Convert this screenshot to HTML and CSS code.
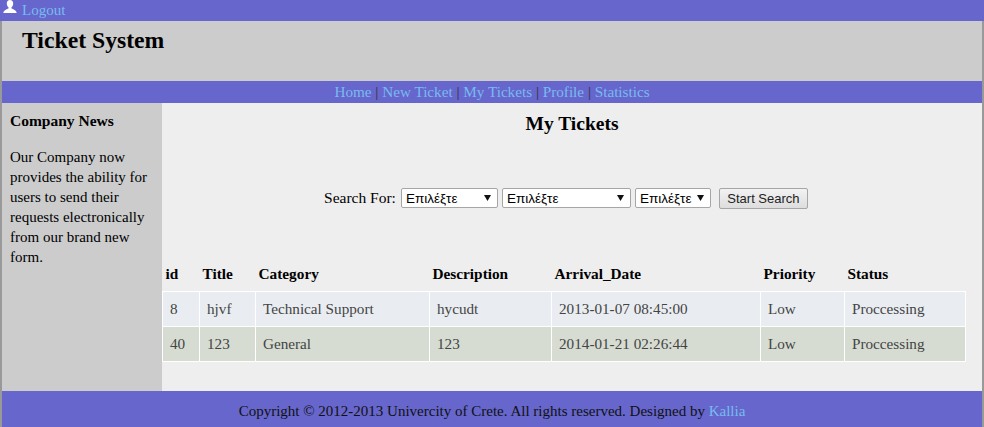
FILE: index.html
```html
<!DOCTYPE html>
<html>
<head>
    <meta name="viewport" content="width=device-width, initial-scale=1">
    <title>Ticket System</title>
<link rel="stylesheet" href="styles.css">
</head>
<body>
  <div class="wrapper">
    <div class="topbar">
      <svg class="user-icon" width="14" height="14" viewBox="0 0 14 14"><path d="M7 0C5 0 3.8 1.5 3.8 3.5 3.8 5.2 4.6 6.6 5.5 7.3V8.4C4 9.2 .6 9.8.3 13H13.7C13.4 9.8 10 9.2 8.5 8.4V7.3C9.4 6.6 10.2 5.2 10.2 3.5 10.2 1.5 9 0 7 0Z" fill="#fff"/></svg>
      <a href="#">Logout</a>
    </div>
    <div class="header">
      <h1>Ticket System</h1>
    </div>
    <div class="nav">
      <a href="#">Home</a> | <a href="#">New Ticket</a> | <a href="#">My Tickets</a> | <a href="#">Profile</a> | <a href="#">Statistics</a>
    </div>
    <div class="middle">
      <div class="sidebar">
        <h3>Company News</h3>
        <p>Our Company now provides the ability for users to send their requests electronically from our brand new form.</p>
      </div>
      <div class="content">
        <h2>My Tickets</h2>
        <form class="search">
          <span>Search For:</span>
          <select class="sel-a"><option>Επιλέξτε</option></select>
          <select class="sel-b"><option>Επιλέξτε</option></select>
          <select class="sel-c"><option>Επιλέξτε</option></select>
          <button type="button">Start Search</button>
        </form>
        <table class="tickets">
          <colgroup>
            <col class="c-id"><col class="c-title"><col class="c-cat"><col class="c-desc"><col class="c-date"><col class="c-pri"><col class="c-status">
          </colgroup>
          <thead>
            <tr><th>id</th><th>Title</th><th>Category</th><th>Description</th><th>Arrival_Date</th><th>Priority</th><th>Status</th></tr>
          </thead>
          <tbody>
            <tr class="odd"><td>8</td><td>hjvf</td><td>Technical Support</td><td>hycudt</td><td>2013-01-07 08:45:00</td><td>Low</td><td>Proccessing</td></tr>
            <tr class="even"><td>40</td><td>123</td><td>General</td><td>123</td><td>2014-01-21 02:26:44</td><td>Low</td><td>Proccessing</td></tr>
          </tbody>
        </table>
      </div>
    </div>
    <div class="footer">
      Copyright © 2012-2013 Univercity of Crete. All rights reserved. Designed by <a href="#">Kallia</a>
    </div>
  </div>
</body>
</html>
```
FILE: styles.css
```css
* {
  box-sizing: border-box;
}

html, body {
  height: 100%;
}

body {
  margin: 0;
  background: #999999;
  font-family: "Liberation Serif", "Times New Roman", serif;
  font-size: 15px;
  color: #000;
  overflow: hidden;
}

a {
  color: #78bcee;
  text-decoration: none;
}

.wrapper {
  margin: 0 2px;
  height: 427px;
  display: flex;
  flex-direction: column;
}

.topbar {
  height: 21px;
  margin: 0 -2px;
  background: #6666cc;
  display: flex;
  align-items: flex-start;
  gap: 5px;
  padding-left: 3px;
  line-height: 21px;
}

.user-icon {
  flex: none;
}

.header {
  height: 60px;
  background: #cccccc;
  padding: 6px 0 0 20px;
}

.header h1 {
  margin: 0;
  font-size: 23.7px;
  line-height: 27px;
}

.nav {
  height: 22px;
  background: #6666cc;
  text-align: center;
  font-size: 15.2px;
  line-height: 22px;
  color: #333;
}

.middle {
  height: 288px;
  display: flex;
}

.sidebar {
  width: 160px;
  background: #cccccc;
  padding: 8px;
  line-height: 20px;
}

.sidebar h3 {
  margin: 0 0 16px;
  font-size: 15.5px;
}

.sidebar p {
  margin: 0;
}

.content {
  flex: 1;
  background: #eeeeee;
}

.content h2 {
  margin: 0;
  padding-top: 10px;
  height: 85px;
  font-size: 19.5px;
  line-height: 21px;
  text-align: center;
}

.search {
  height: 68px;
  display: flex;
  justify-content: center;
  align-items: flex-start;
  padding-right: 12px;
}

.search span {
  margin-right: 5px;
  font-size: 15.5px;
  line-height: 20px;
}

.search select {
  height: 20px;
  margin-right: 4px;
  padding: 0 0 0 4px;
  appearance: none;
  background: #fff url("data:image/svg+xml,%3Csvg xmlns='http://www.w3.org/2000/svg' width='7' height='6'%3E%3Cpath d='M0 0H7L3.5 6Z' fill='%23111'/%3E%3C/svg%3E") no-repeat right 6px center;
  border: 1px solid #a6a6a6;
  border-radius: 2px;
  font-family: "Liberation Sans", Arial, sans-serif;
  font-size: 13.5px;
  color: #000;
}

.sel-a {
  width: 97px;
}

.sel-b {
  width: 129px;
}

.sel-c {
  width: 76px;
}

.search button {
  height: 21px;
  width: 89px;
  margin-left: 4px;
  padding: 0;
  background: linear-gradient(#f2f2f2, #dddddd);
  border: 1px solid #a6a6a6;
  border-radius: 2px;
  font-family: "Liberation Sans", Arial, sans-serif;
  font-size: 13px;
  color: #222;
}

.tickets {
  width: 803px;
  table-layout: fixed;
  border-collapse: collapse;
}

.c-id { width: 37px; }
.c-title { width: 56px; }
.c-cat { width: 174px; }
.c-desc { width: 122px; }
.c-date { width: 209px; }
.c-pri { width: 84px; }
.c-status { width: 121px; }

.tickets th {
  height: 35px;
  padding: 1px 0 0 3px;
  text-align: left;
  font-size: 15.3px;
}

.tickets td {
  height: 35px;
  padding: 0 0 0 7px;
  border: 1px solid #fff;
  color: #444;
  font-size: 15.2px;
}

.odd td {
  background: #e9edf1;
}

.even td {
  background: #d6dcd2;
}

.footer {
  height: 36px;
  background: #6666cc;
  text-align: center;
  line-height: 41px;
  color: #111;
}
```
